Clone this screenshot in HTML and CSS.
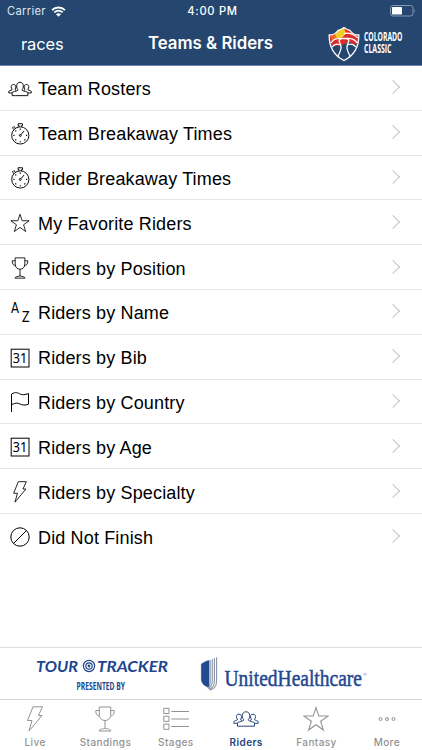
FILE: index.html
```html
<!DOCTYPE html>
<html lang="en">
<head>
    <meta charset="UTF-8">
    <meta name="viewport" content="width=device-width, initial-scale=1.0">
    <title>Teams &amp; Riders</title>
    <link rel="stylesheet" href="styles.css">
</head>
<body>
    <!-- Shared icons -->
    <svg class="sprite">
        <symbol id="team" viewBox="0 0 26 16">
            <path d="M8.3 15.2H4.5V12C4.5 10.7 9.6 10.6 10.6 9.4V8.4C9.7 7.6 9.4 6.5 9.4 4.5C9.4 2.2 10.8.8 13 .8S16.6 2.2 16.6 4.5C16.6 6.5 16.3 7.6 15.400 8.400V9.400C16.400 10.600 21.500 10.700 21.500 12V15.200Z"/>
            <path d="M4.500 12.300H.8V10.700C.8 9.700 3.500 9.700 4.300 8.900V8C3.600 7.500 3.500 6.500 3.500 5.500C3.500 4 4.500 3.200 6 3.200S8.500 4 8.500 5.500C8.500 6.800 8.300 7.500 7.700 8V8.900L9 9.600M21.500 12.300H25.200V10.700C25.200 9.700 22.500 9.700 21.700 8.900V8C22.400 7.500 22.500 6.500 22.500 5.500C22.500 4 21.500 3.200 20 3.200S17.500 4 17.500 5.500C17.500 6.800 17.700 7.500 18.300 8V8.900L17 9.600"/>
        </symbol>
        <symbol id="watch" viewBox="0 0 20 23">
            <circle cx="10.300" cy="13" r="9"/>
            <path d="M9 4V2.800H8V.8H12.600V2.800H11.600V4M3.700 6.800L2 5.300L3.600 3.700L5.300 5.200M10.800 12.400L14.300 8.300"/>
            <circle cx="10.300" cy="13" r="1"/>
            <path class="ticks" d="M10.300 5.800V7M10.300 19V20.200M3.100 13H4.300M16.300 13H17.500M5.200 7.900L6 8.700M14.600 17.300L15.400 18.100M5.200 18.100L6 17.300"/>
        </symbol>
        <symbol id="star" viewBox="0 0 24 24">
            <path d="M12 1.500L14.600 9.300H23L16.300 14.100L18.800 22.200L12 17.300L5.200 22.200L7.700 14.100L1 9.300H9.400Z"/>
        </symbol>
        <symbol id="cup" viewBox="0 0 20 26">
            <path d="M4.300 1H15.700V8C15.700 12 13.500 14.500 10 14.500S4.300 12 4.300 8ZM4.300 4.500H.8C.8 8.500 2.300 10 4.700 10M15.700 4.500H19.200C19.200 8.500 17.700 10 15.300 10M10 14.500V22.500M10 22.500C8.500 22.600 4 23.300 4 25H16C16 23.300 11.500 22.600 10 22.500Z"/>
        </symbol>
        <symbol id="bolt" viewBox="0 0 18 26">
            <path d="M7 .8H16.500L12.500 9.500H16L3 25L6 14.500H1.500Z"/>
        </symbol>
        <symbol id="calendar" viewBox="0 0 20 20">
            <rect x="1.200" y="1.200" width="17.800" height="17.800"/>
            <text x="2.800" y="14.500" textLength="14.500" lengthAdjust="spacingAndGlyphs">31</text>
        </symbol>
    </svg>

    <div class="app">
        <header class="header">
            <div class="status-bar">
                <div class="carrier">
                    <span>Carrier</span>
                    <svg class="wifi" viewBox="0 0 15 11">
                        <path d="M1 4.100C4.700.6 10.300.6 14 4.100M3.300 6.400C5.700 4.200 9.300 4.200 11.700 6.400"/>
                        <path class="wifi-dot" d="M7.500 10.800L5 8.200C6.400 7 8.600 7 10 8.200Z"/>
                    </svg>
                </div>
                <span class="time">4:00 PM</span>
                <svg class="battery" viewBox="0 0 26 12">
                    <rect class="shell" x=".5" y=".5" width="22.500" height="10.500" rx="2.500"/>
                    <rect x="2" y="2" width="10" height="7.500" rx=".7"/>
                    <path d="M24.200 4V7.500Q25.800 5.800 24.200 4Z" opacity=".5"/>
                </svg>
            </div>
            <div class="nav-bar">
                <a class="back">races</a>
                <h1>Teams &amp; Riders</h1>
                <svg class="race-logo" viewBox="0 0 76 36">
                    <path fill="#d92c2c" d="M1 9.500C5 9 8 7 10 4.500L16 1.500L22 4.500C24 7 27 9 31 9.500L30 17L26 19L22 16L17 18L10 20L3 19Z"/>
                    <path fill="#f3ce28" d="M6 10L10 4.500L16 1.500L18 7L15 11L10 13Z"/>
                    <path fill="#f06a24" d="M2 10L7 8L9 13L4 14Z"/>
                    <g fill="none" stroke="#fff" stroke-width="1.300">
                        <path d="M1.200 9C5.500 9 8 7.500 10 4.500Q12.500 4 16 1.500Q19.500 4 22 4.500C24 7.500 26.500 9 30.800 9C31 20 27 29 16 34.500C5 29 1 20 1.200 9Z"/>
                        <path d="M3 17C6 11.500 11 12.500 16 12.500S25 11 29.500 17M14 12.500C8 14 13.500 17 13 22C12.700 26 10.500 28 9.500 31M18 12.500C24 14 18.500 17 19 22C19.300 26 21.500 28 22.500 31M16 8C20 6 25 8 30 12M4 21Q8 16 13.500 19.500M18.500 19.500Q24 16 28 21"/>
                    </g>
                    <text x="36" y="14.700" textLength="38.500" lengthAdjust="spacingAndGlyphs">COLORADO</text>
                    <text x="36" y="26.700" textLength="27.500" lengthAdjust="spacingAndGlyphs">CLASSIC</text>
                </svg>
            </div>
        </header>

        <main class="menu">
            <a class="row"><svg class="icon team"><use href="#team"/></svg><span>Team Rosters</span></a>
            <a class="row"><svg class="icon watch"><use href="#watch"/></svg><span>Team Breakaway Times</span></a>
            <a class="row"><svg class="icon watch"><use href="#watch"/></svg><span>Rider Breakaway Times</span></a>
            <a class="row"><svg class="icon"><use href="#star"/></svg><span>My Favorite Riders</span></a>
            <a class="row"><svg class="icon cup"><use href="#cup"/></svg><span>Riders by Position</span></a>
            <a class="row">
                <svg class="icon az" viewBox="0 0 20 22">
                    <text x="1" y="11" textLength="8" lengthAdjust="spacingAndGlyphs">A</text>
                    <text x="12" y="19.500" textLength="7.500" lengthAdjust="spacingAndGlyphs">Z</text>
                </svg>
                <span>Riders by Name</span>
            </a>
            <a class="row"><svg class="icon"><use href="#calendar"/></svg><span>Riders by Bib</span></a>
            <a class="row">
                <svg class="icon" viewBox="0 0 20 20">
                    <path d="M1.500 20V2C6-.5 8 1 10 2S15 3 18.500 1.500V12.200C15 13.700 12 13 10 12S6 10.500 1.500 12.700"/>
                </svg>
                <span>Riders by Country</span>
            </a>
            <a class="row"><svg class="icon"><use href="#calendar"/></svg><span>Riders by Age</span></a>
            <a class="row"><svg class="icon bolt"><use href="#bolt"/></svg><span>Riders by Specialty</span></a>
            <a class="row">
                <svg class="icon" viewBox="0 0 20 20">
                    <circle cx="10" cy="10" r="9.200"/>
                    <path d="M3.500 16.500L16.500 3.500"/>
                </svg>
                <span>Did Not Finish</span>
            </a>
        </main>

        <div class="sponsors">
            <svg class="tracker" viewBox="0 0 134 36">
                <g class="tracker-name">
                    <text x="0" y="15.500" textLength="42" lengthAdjust="spacingAndGlyphs">TOUR</text>
                    <text x="61" y="15.500" textLength="71" lengthAdjust="spacingAndGlyphs">TRACKER</text>
                </g>
                <g class="target">
                    <circle cx="53" cy="10" r="5.600"/>
                    <circle cx="53" cy="10" r="3.200"/>
                    <circle cx="53" cy="10" r=".8"/>
                </g>
                <text class="presented" x="40.500" y="34" textLength="48.500" lengthAdjust="spacingAndGlyphs">PRESENTED BY</text>
            </svg>
            <svg class="united" viewBox="0 0 166 36">
                <path fill="#24498f" d="M.3 8C2.500 6.500 5 5 8 4.500V31.500C3 30 .3 27 .3 23Z"/>
                <path class="stripes" d="M9.200 4V26C9.200 29 8 31 6.500 31.700M11.300 3.200V25C11.300 29 9 32 7 32.500M13.400 2.200V25C13.400 30 11 32.500 8 33.300M15.600 1.200V25C15.600 31 12 34 8.500 34"/>
                <text x="23.500" y="29.500" textLength="137.500" lengthAdjust="spacingAndGlyphs">UnitedHealthcare</text>
                <text class="mark" x="162" y="19.500">®</text>
            </svg>
        </div>

        <nav class="tabs">
            <a class="tab"><svg class="icon bolt"><use href="#bolt"/></svg><span>Live</span></a>
            <a class="tab"><svg class="icon cup"><use href="#cup"/></svg><span>Standings</span></a>
            <a class="tab">
                <svg class="icon list" viewBox="0 0 26 24">
                    <path d="M.8 1.300H6V6.500H.8ZM.8 9.200H6V14.400H.8ZM.8 17.100H6V22.300H.8ZM8.300 4.500H26M8.300 12H26M8.300 19.500H26"/>
                </svg>
                <span>Stages</span>
            </a>
            <a class="tab active"><svg class="icon team"><use href="#team"/></svg><span>Riders</span></a>
            <a class="tab"><svg class="icon"><use href="#star"/></svg><span>Fantasy</span></a>
            <a class="tab">
                <svg class="icon more" viewBox="0 0 18 6">
                    <circle cx="2.500" cy="3" r="1.500"/>
                    <circle cx="9" cy="3" r="1.500"/>
                    <circle cx="15.500" cy="3" r="1.500"/>
                </svg>
                <span>More</span>
            </a>
        </nav>
    </div>
</body>
</html>
```
FILE: styles.css
```css
/* General styling */
* {
    box-sizing: border-box;
}

body {
    margin: 0;
    font-family: Inter, Roboto, sans-serif;
    background-color: #ffffff;
}

svg {
    overflow: visible;
}

.sprite {
    display: none;
}

.app {
    display: flex;
    flex-direction: column;
    height: 750px;
    overflow: hidden;
}

/* Header */
.header {
    height: 66px;
    flex: none;
    background-color: #24466f;
    border-bottom: 1px solid #7184ad;
    color: #ffffff;
}

.status-bar {
    display: grid;
    grid-template-columns: 1fr auto 1fr;
    align-items: center;
    height: 22px;
    padding: 0 6px 0 7px;
    font-size: 11.2px;
}

.carrier {
    display: flex;
    align-items: center;
    gap: 5px;
    letter-spacing: 0.3px;
    color: #dfe6ef;
}

.wifi {
    width: 15px;
    height: 11px;
    fill: none;
    stroke: #ffffff;
    stroke-width: 1.9;
}

.wifi-dot {
    fill: #ffffff;
    stroke: none;
}

.time {
    padding-left: 2px;
    font-weight: 500;
    letter-spacing: 0.7px;
}

.battery {
    justify-self: end;
    width: 26px;
    height: 12px;
    fill: #ffffff;
}

.battery .shell {
    fill: none;
    stroke: #8497b0;
}

.nav-bar {
    display: grid;
    grid-template-columns: 1fr auto 1fr;
    align-items: center;
    height: 43px;
    padding: 0 18px 0 21px;
}

.back {
    font-size: 16.5px;
    letter-spacing: -0.1px;
}

h1 {
    margin: 0 4px 2px 0;
    font-size: 16.800px;
    font-weight: 600;
}

.race-logo {
    justify-self: end;
    width: 76px;
    height: 36px;
    font: bold 12.500px "Open Sans", sans-serif;
    fill: #ffffff;
}

/* Menu rows */
.menu {
    flex: 1;
}

.row {
    display: flex;
    align-items: center;
    gap: 6px;
    height: 44.8px;
    padding: 2px 24px 0 8px;
    border-bottom: 1px solid #e6e6e8;
    font-family: "Liberation Sans", Arial, sans-serif;
    font-size: 18px;
    letter-spacing: 0.15px;
    color: #000000;
}

.row span {
    padding-top: 2px;
}

.row:last-child {
    border-bottom: none;
}

.row::after {
    content: "";
    width: 9px;
    height: 9px;
    margin: -3px 0 0 auto;
    border: solid #c4c4c8;
    border-width: 1.800px 1.800px 0 0;
    transform: rotate(45deg);
}

/* Icons */
.icon {
    width: 24px;
    height: 20px;
    flex: none;
    fill: none;
    stroke: currentColor;
    stroke-width: 1;
}

.icon text,
#calendar text {
    font: 13.500px "Noto Sans", sans-serif;
    letter-spacing: 0;
    fill: currentColor;
    stroke: none;
}

.row .watch,
.row .cup,
.row .bolt,
.row .az {
    height: 22px;
}

.icon.az text {
    font: 15px Lato, sans-serif;
}

.ticks {
    stroke-width: 1.300;
}

/* Sponsor banner */
.sponsors {
    display: flex;
    gap: 31px;
    height: 52px;
    padding: 8px 0 0 36px;
    border-top: 1px solid #dedede;
}

.tracker {
    width: 134px;
    height: 36px;
    fill: #20458e;
}

.tracker-name {
    font: italic bold 15.500px Lato, sans-serif;
}

.target {
    fill: none;
    stroke: #20458e;
    stroke-width: 1.200;
}

.presented {
    font: bold 11px "Open Sans", sans-serif;
}

.united {
    width: 166px;
    height: 36px;
    font: 22.500px "Liberation Serif", serif;
    fill: #24498f;
    stroke: #24498f;
    stroke-width: 0.500;
}

.stripes {
    fill: none;
    stroke: #8793a5;
    stroke-width: 1.100;
}

.mark {
    font-size: 5px;
    stroke: none;
}

/* Tab bar */
.tabs {
    display: flex;
    height: 51px;
    border-top: 1px solid #d5d5d5;
}

.tab {
    flex: 1 1 0;
    display: flex;
    flex-direction: column;
    align-items: center;
    justify-content: space-between;
    padding-top: 6px;
    font-size: 10px;
    font-weight: 500;
    letter-spacing: 0.400px;
    color: #929292;
}

.tab span {
    height: 14px;
    line-height: 12px;
}

.tab .icon {
    width: 26px;
    height: 26px;
}

.tab.active {
    font-weight: 600;
    color: #24467f;
}

.tab .more {
    width: 18px;
}
```
